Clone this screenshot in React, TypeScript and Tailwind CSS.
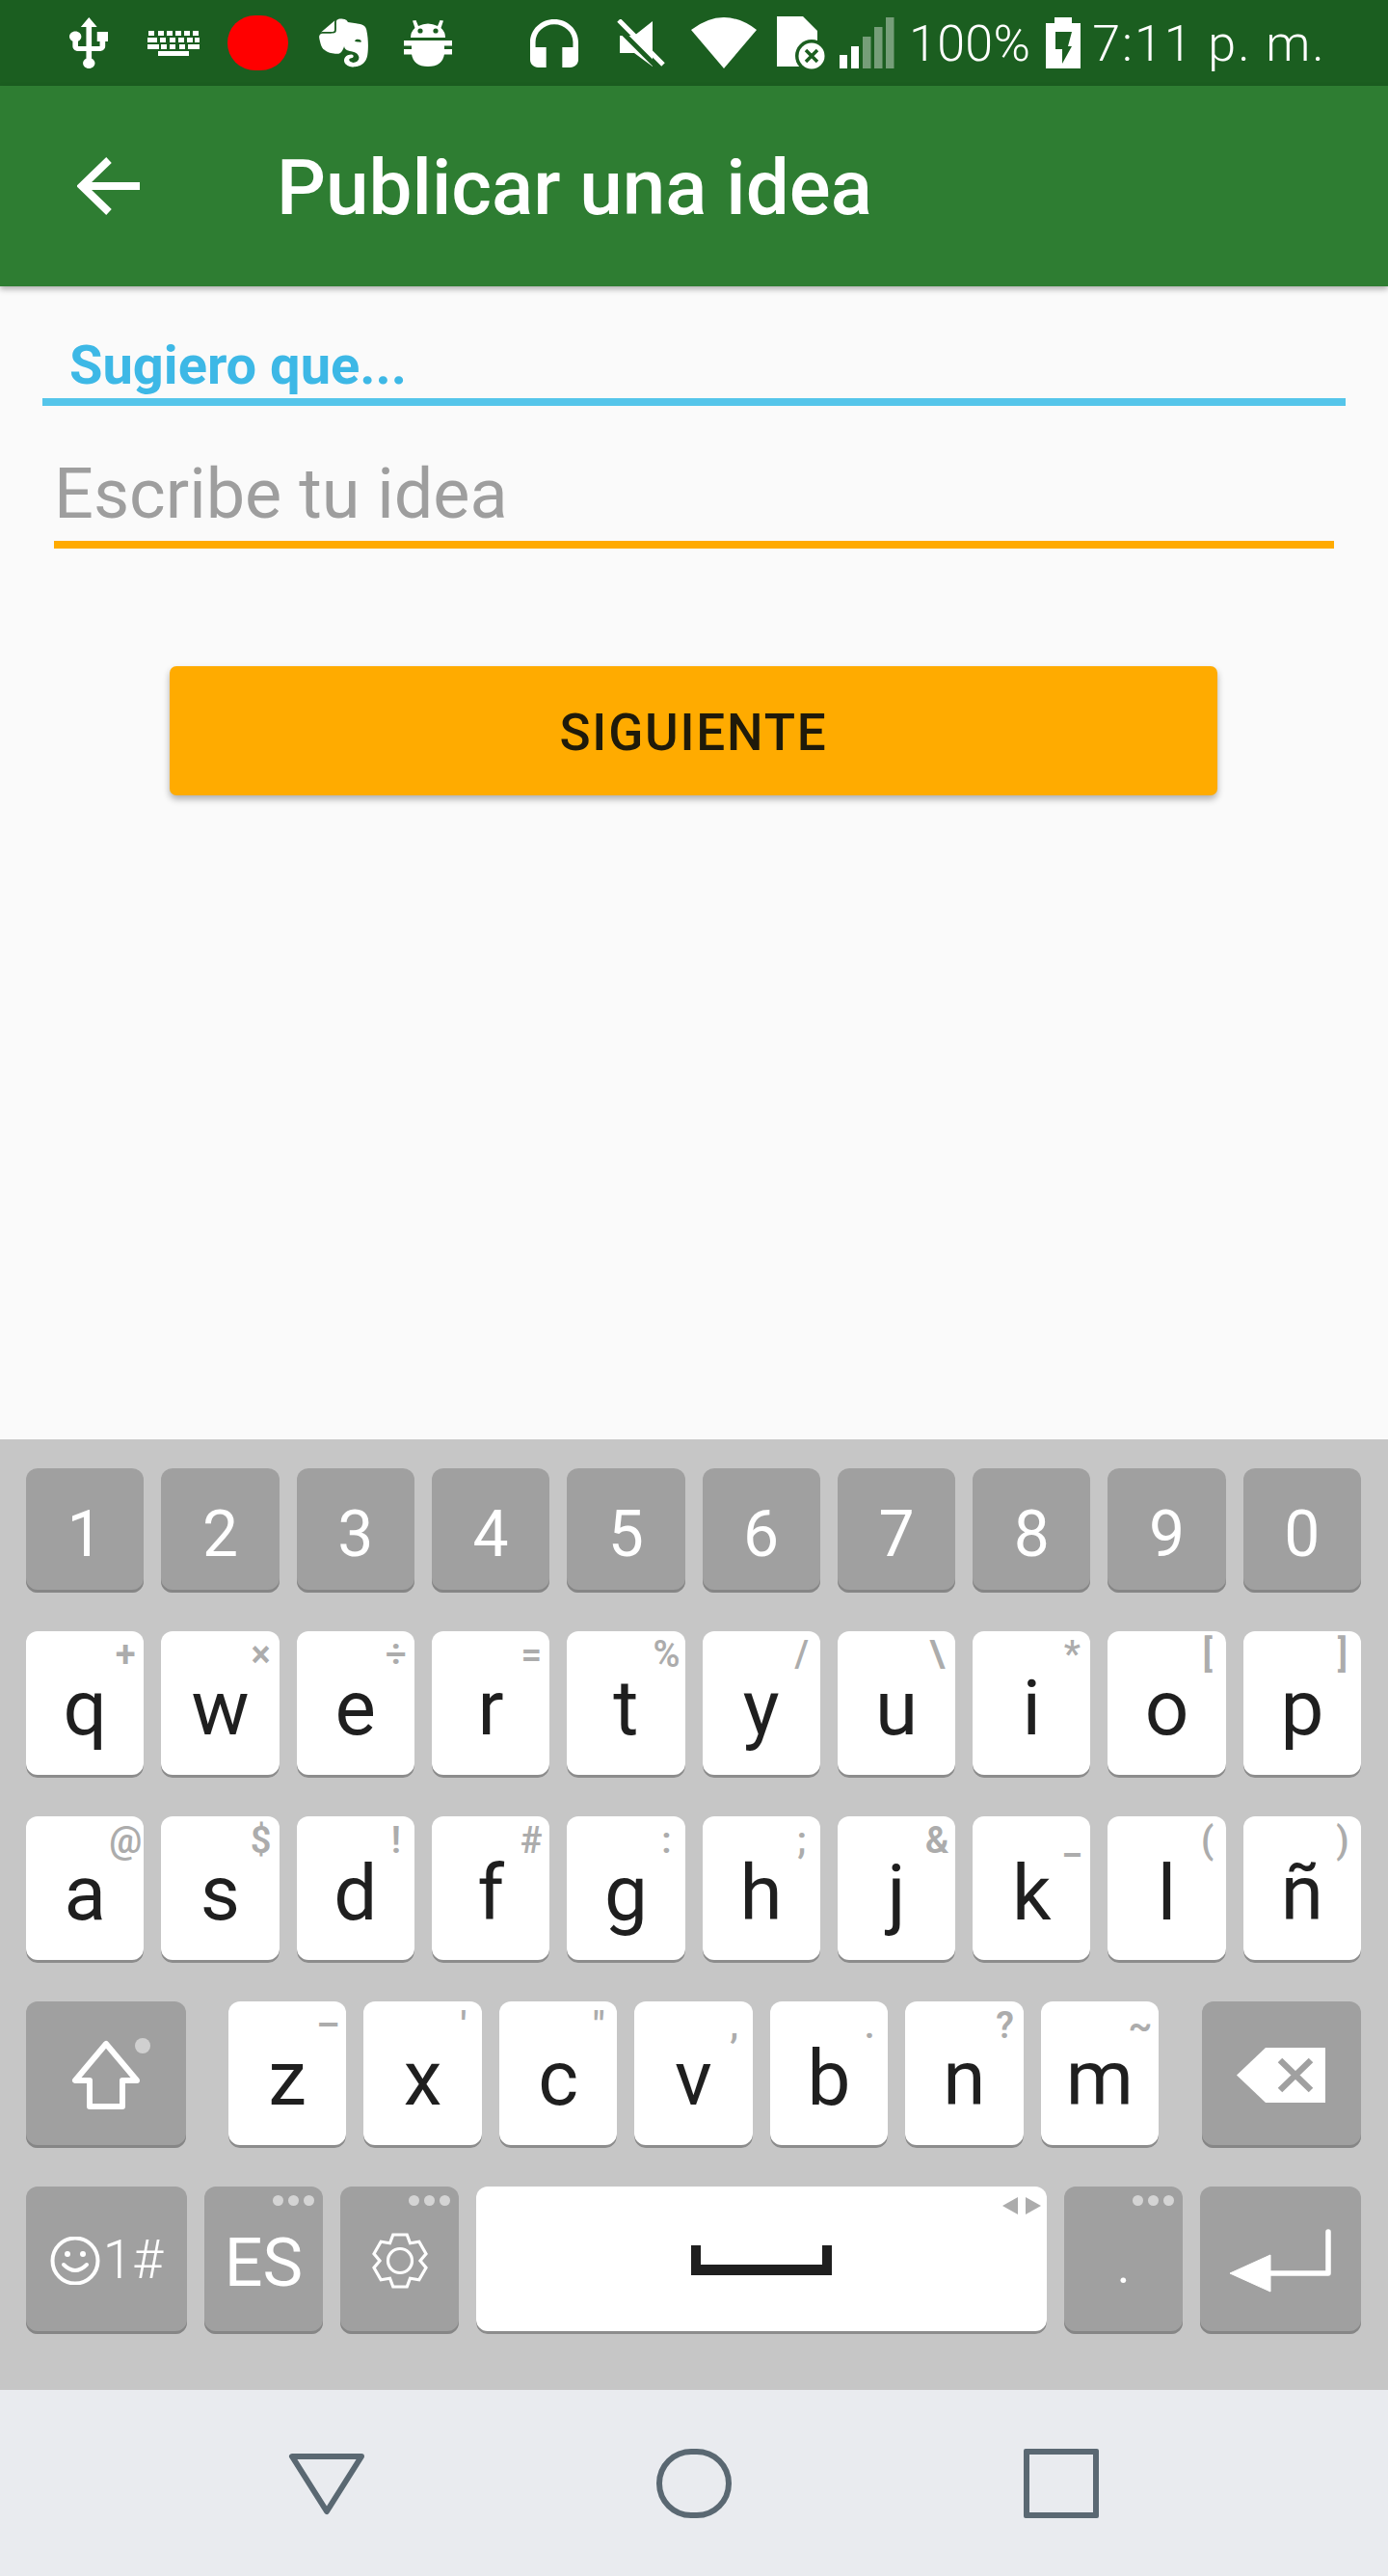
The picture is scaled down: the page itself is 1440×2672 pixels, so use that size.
import React from "react";
import { FaEvernote } from "react-icons/fa";

const LIGHT_KEY = "bg-white shadow-[inset_0_-3px_0_#8c8c8c]";
const DARK_KEY = "bg-[#a0a0a0] shadow-[inset_0_-3px_0_#868686]";

const row2 = [
  ["q", "+"], ["w", "×"], ["e", "÷"], ["r", "="], ["t", "%"],
  ["y", "/"], ["u", "\\"], ["i", "*"], ["o", "["], ["p", "]"],
];
const row3 = [
  ["a", "@"], ["s", "$"], ["d", "!"], ["f", "#"], ["g", ":"],
  ["h", ";"], ["j", "&"], ["k", "_"], ["l", "("], ["ñ", ")"],
];
const row4 = [
  ["z", "–"], ["x", "'"], ["c", '"'], ["v", ","], ["b", "."], ["n", "?"], ["m", "~"],
];

function LetterKey({ letter, hint, top }: { letter: string; hint: string; top: string }) {
  return (
    <div className={`relative h-[152px] rounded-[12px] ${LIGHT_KEY} flex justify-center pt-[40px]`}>
      <span className="text-[80px] leading-none text-[#1f1f1f]">{letter}</span>
      <span className={`absolute right-[19px] translate-x-1/2 ${top} text-[38px] leading-none font-semibold text-[#acacac]`}>
        {hint}
      </span>
    </div>
  );
}

function Dots() {
  return (
    <div className="absolute top-[9px] right-[9px] flex gap-[5px]">
      <div className="w-[11px] h-[11px] rounded-full bg-[#d4d4d4]" />
      <div className="w-[11px] h-[11px] rounded-full bg-[#d4d4d4]" />
      <div className="w-[11px] h-[11px] rounded-full bg-[#d4d4d4]" />
    </div>
  );
}

function Gear() {
  const cx = 30;
  const cy = 29;
  const points: string[] = [];
  for (let i = 0; i < 6; i++) {
    const a = -90 + i * 60;
    [[-30, 21], [-15, 28], [15, 28], [30, 21]].forEach(([d, r]) => {
      const t = ((a + d) * Math.PI) / 180;
      points.push(`${(cx + r * Math.cos(t)).toFixed(1)},${(cy + r * Math.sin(t)).toFixed(1)}`);
    });
  }
  return (
    <svg width="60" height="58" viewBox="0 0 60 58" fill="none" stroke="white" strokeWidth="3.2">
      <polygon points={points.join(" ")} />
      <circle cx={cx} cy={cy} r="12.5" />
    </svg>
  );
}

function StatusBar() {
  return (
    <div className="h-[89px] bg-[#1b5e20] flex items-center pl-[72px] text-white shrink-0">
      {/* usb */}
      <svg width="40" height="53" viewBox="4.8 1 14.2 21.2" preserveAspectRatio="none" fill="white">
        <path d="M15 7v4h1v2h-3V5h2l-3-4-3 4h2v8H8v-2.07c.7-.37 1.2-1.08 1.2-1.93 0-1.21-.99-2.2-2.2-2.2-1.21 0-2.2.99-2.2 2.2 0 .85.5 1.56 1.2 1.93V13c0 1.11.89 2 2 2h3v3.05c-.71.37-1.2 1.1-1.2 1.95 0 1.22.99 2.2 2.2 2.2 1.21 0 2.2-.98 2.2-2.2 0-.85-.49-1.58-1.2-1.95V15h3c1.11 0 2-.89 2-2v-2h1V7h-4z" />
      </svg>
      {/* keyboard */}
      <svg className="ml-[41px]" width="54" height="26" viewBox="0 0 54 26" fill="white">
        <rect x="1" y="0" width="6" height="5" /><rect x="11" y="0" width="6" height="5" /><rect x="20" y="0" width="6" height="5" /><rect x="29" y="0" width="6" height="5" /><rect x="38" y="0" width="6" height="5" /><rect x="47" y="0" width="6" height="5" />
        <rect x="0" y="7" width="10" height="5" /><rect x="13" y="7" width="6" height="5" /><rect x="23" y="7" width="6" height="5" /><rect x="32" y="7" width="6" height="5" /><rect x="41" y="7" width="6" height="5" /><rect x="49" y="7" width="5" height="5" />
        <rect x="0" y="14" width="12" height="5" /><rect x="14" y="14" width="6" height="5" /><rect x="23" y="14" width="6" height="5" /><rect x="33" y="14" width="6" height="5" /><rect x="42" y="14" width="12" height="5" />
        <rect x="11" y="21" width="32" height="5" />
      </svg>
      {/* recording dot */}
      <div className="ml-[29px] w-[63px] h-[57px] rounded-full bg-[#ff0000]" />
      {/* evernote */}
      <FaEvernote className="ml-[32px] w-[51px] h-[57px] text-white" preserveAspectRatio="none" />
      {/* debug bug */}
      <svg className="ml-[37px]" width="50" height="48" viewBox="0 0 50 48" fill="white">
        <path d="M9 0.5 L12.5 0 L15 6 Q25 1 35 6 L37.5 0 L41 0.5 L38.5 8 Q43 12 43 18 L7 18 Q7 12 11.5 8 Z" />
        <circle cx="17" cy="11" r="2.6" fill="#1b5e20" />
        <circle cx="33" cy="11" r="2.6" fill="#1b5e20" />
        <rect x="0" y="21" width="50" height="5.5" />
        <rect x="0" y="30" width="50" height="5.5" />
        <path d="M8 26 H42 V30 H8 Z" />
        <path d="M8 35 H42 Q40 48 25 48 Q10 48 8 35 Z" />
      </svg>
      {/* headset */}
      <svg className="ml-[81px]" width="50" height="50" viewBox="3 1 18 19" preserveAspectRatio="none" fill="white">
        <path d="M12 1c-4.97 0-9 4.03-9 9v7c0 1.66 1.34 3 3 3h3v-8H5v-2c0-3.87 3.13-7 7-7s7 3.13 7 7v2h-4v8h3c1.66 0 3-1.34 3-3v-7c0-4.97-4.03-9-9-9z" />
      </svg>
      {/* muted */}
      <svg className="ml-[40px]" width="51" height="50" viewBox="0 0 51 50">
        <polygon points="3,17 18,17 37,2 37,49 18,35 3,35" fill="white" />
        <line x1="-2" y1="6" x2="44" y2="52" stroke="#1b5e20" strokeWidth="5" />
        <line x1="2" y1="1" x2="48" y2="47" stroke="white" strokeWidth="5" />
      </svg>
      {/* wifi */}
      <svg className="ml-[25px]" width="70" height="53" viewBox="0 0 70 53" fill="white">
        <path d="M35 53 L1 13 Q35 -13 69 13 Z" />
      </svg>
      {/* sim */}
      <svg className="ml-[20px]" width="52" height="55" viewBox="0 0 52 55">
        <path d="M0 0 H27 L42 15 V52 H0 Z" fill="white" />
        <circle cx="36" cy="41" r="17" fill="#1b5e20" />
        <circle cx="36" cy="41" r="13.5" fill="white" />
        <path d="M30 35 L42 47 M42 35 L30 47" stroke="#1b5e20" strokeWidth="3.5" />
      </svg>
      {/* signal */}
      <svg className="ml-[13px]" width="57" height="53" viewBox="0 0 57 53" fill="white">
        <rect x="0" y="39" width="8" height="14" />
        <rect x="12" y="30" width="8" height="23" />
        <rect x="24" y="20" width="8.5" height="33" opacity="0.4" />
        <rect x="36" y="10" width="8.5" height="43" opacity="0.4" />
        <rect x="48" y="0" width="8.5" height="53" opacity="0.4" />
      </svg>
      <span className="ml-[15px] pt-[2px] text-[52px] leading-none font-light tracking-[0.3px]">100%</span>
      {/* battery */}
      <svg className="ml-[16px]" width="36" height="53" viewBox="0 0 36 53">
        <path d="M9 0 H27 V6 H36 V53 H0 V6 H9 Z" fill="white" />
        <polygon points="10,15 27,15 23,30 27,30 17,48 17,33 10,33" fill="#1b5e20" />
      </svg>
      <span className="ml-[12px] pt-[2px] text-[52px] leading-none font-light tracking-[2px]">7:11 p. m.</span>
    </div>
  );
}

function AppBar() {
  return (
    <div className="relative z-10 h-[208px] bg-[#2e7d32] flex items-center pl-[80px] shrink-0 shadow-[0_3px_6px_rgba(0,0,0,0.3)]">
      <svg width="65" height="60" viewBox="0 0 65 60" fill="none" stroke="white" strokeWidth="8">
        <path d="M65 30 H6 M33 3 L5 30 L33 57" />
      </svg>
      <span className="ml-[142px] pt-[4px] text-[80px] leading-none font-medium text-white">Publicar una idea</span>
    </div>
  );
}

function Keyboard() {
  return (
    <div className="h-[986px] bg-[#c6c6c6] pt-[30px] pl-[27px] pr-[28px] flex flex-col gap-[40px] shrink-0">
      <div className="grid grid-cols-10 gap-[18px]">
        {["1", "2", "3", "4", "5", "6", "7", "8", "9", "0"].map((d) => (
          <div key={d} className={`h-[129px] rounded-[12px] ${DARK_KEY} flex justify-center pt-[36px]`}>
            <span className="text-[66px] leading-none text-white">{d}</span>
          </div>
        ))}
      </div>

      <div className="grid grid-cols-10 gap-[18px]">
        {row2.map(([l, h]) => (
          <LetterKey key={l} letter={l} hint={h} top="top-[5px]" />
        ))}
      </div>

      <div className="grid grid-cols-10 gap-[18px]">
        {row3.map(([l, h]) => (
          <LetterKey key={l} letter={l} hint={h} top="top-[6px]" />
        ))}
      </div>

      <div className="flex">
        <div className={`relative w-[166px] h-[152px] rounded-[12px] ${DARK_KEY} flex items-center justify-center`}>
          <svg width="72" height="72" viewBox="0 0 72 72" fill="none" stroke="white" strokeWidth="6" strokeLinejoin="round">
            <path d="M36 4 L4 42 H19 V69 H53 V42 H68 Z" />
          </svg>
          <div className="absolute top-[38px] right-[37px] w-[16px] h-[16px] rounded-full bg-[#d0d0d0]" />
        </div>
        <div className="ml-[44px] w-[965px] grid grid-cols-7 gap-[18px]">
          {row4.map(([l, h]) => (
            <LetterKey key={l} letter={l} hint={h} top="top-[6px]" />
          ))}
        </div>
        <div className={`ml-[45px] w-[165px] h-[152px] rounded-[12px] ${DARK_KEY} flex items-center justify-center pr-[2px]`}>
          <svg width="92" height="57" viewBox="0 0 92 57">
            <polygon points="0,28.5 30,0 92,0 92,57 30,57" fill="white" />
            <path d="M45 13 L77 44 M77 13 L45 44" stroke="#a0a0a0" strokeWidth="6.5" />
          </svg>
        </div>
      </div>

      <div className="flex gap-[18px]">
        <div className={`w-[167px] h-[153px] rounded-[12px] ${DARK_KEY} flex items-center justify-center gap-[3px]`}>
          <svg width="52" height="50" viewBox="0 0 52 50" fill="none" stroke="white" strokeWidth="4">
            <circle cx="26" cy="25" r="23.5" />
            <circle cx="18" cy="18" r="3" fill="white" stroke="none" />
            <circle cx="34" cy="18" r="3" fill="white" stroke="none" />
            <path d="M14 29 Q26 41 38 29" strokeLinecap="round" />
          </svg>
          <span className="text-[55px] leading-none font-light text-white">1#</span>
        </div>
        <div className={`relative w-[123px] h-[153px] rounded-[12px] ${DARK_KEY} flex items-center justify-center`}>
          <Dots />
          <span className="pt-[4px] text-[70px] leading-none text-white">ES</span>
        </div>
        <div className={`relative w-[123px] h-[153px] rounded-[12px] ${DARK_KEY} flex items-center justify-center`}>
          <Dots />
          <Gear />
        </div>
        <div className={`relative w-[592px] h-[153px] rounded-[12px] ${LIGHT_KEY} flex items-center justify-center`}>
          <div className="w-[146px] h-[31px] border-x-[10px] border-b-[11px] border-[#1f1f1f]" />
          <svg className="absolute top-[11px] right-[6px]" width="40" height="18" viewBox="0 0 40 18" fill="#acacac">
            <polygon points="0,9 16,0 16,18" />
            <polygon points="24,0 40,9 24,18" />
          </svg>
        </div>
        <div className={`relative w-[123px] h-[153px] rounded-[12px] ${DARK_KEY} flex justify-center pt-[58px]`}>
          <Dots />
          <span className="text-[50px] leading-none text-white">.</span>
        </div>
        <div className={`w-[167px] h-[153px] rounded-[12px] ${DARK_KEY} flex items-center justify-center`}>
          <svg width="105" height="66" viewBox="0 0 105 66" fill="white">
            <polygon points="0,46 42,27 42,65" stroke="white" strokeWidth="1" strokeLinejoin="round" />
            <path d="M40 46 H102 V3" fill="none" stroke="white" strokeWidth="5.5" strokeLinecap="round" strokeLinejoin="round" />
          </svg>
        </div>
      </div>
    </div>
  );
}

function NavBar() {
  return (
    <div className="h-[193px] shrink-0 bg-[#e9ebef] flex items-center">
      <svg className="ml-[298px] mt-[1px]" width="82" height="66" viewBox="0 0 82 66" fill="none" stroke="#5a6872" strokeWidth="6" strokeLinejoin="round">
        <polygon points="5,5 77,5 41,62" />
      </svg>
      <div className="ml-[301px] w-[78px] h-[72px] rounded-full border-[6px] border-[#5a6872]" />
      <div className="ml-[303px] w-[78px] h-[72px] rounded-[2px] border-[6px] border-[#5a6872]" />
    </div>
  );
}

export default function App() {
  return (
    <div className="w-[1440px] h-[2672px] flex flex-col bg-[#fafafa] font-[Roboto,sans-serif]">
      <StatusBar />
      <AppBar />
      <main className="flex-1 px-[44px] pt-[54px]">
        <div className="pl-[28px] pb-[6px] border-b-[8px] border-[#55c5ea] text-[56px] leading-none font-bold text-[#3db8e6]">
          Sugiero que...
        </div>
        <div className="mt-[56px] mx-[12px] pb-[12px] border-b-[8px] border-[#ffab00] text-[72px] leading-none text-[#9e9e9e]">
          Escribe tu idea
        </div>
        <button className="mt-[122px] ml-[132px] w-[1087px] h-[134px] pt-[6px] rounded-[7px] bg-[#ffab00] shadow-[0_4px_7px_rgba(0,0,0,0.3)] text-[53px] tracking-[1.8px] font-medium text-[#1f1a0a] flex items-center justify-center">
          SIGUIENTE
        </button>
      </main>
      <Keyboard />
      <NavBar />
    </div>
  );
}
